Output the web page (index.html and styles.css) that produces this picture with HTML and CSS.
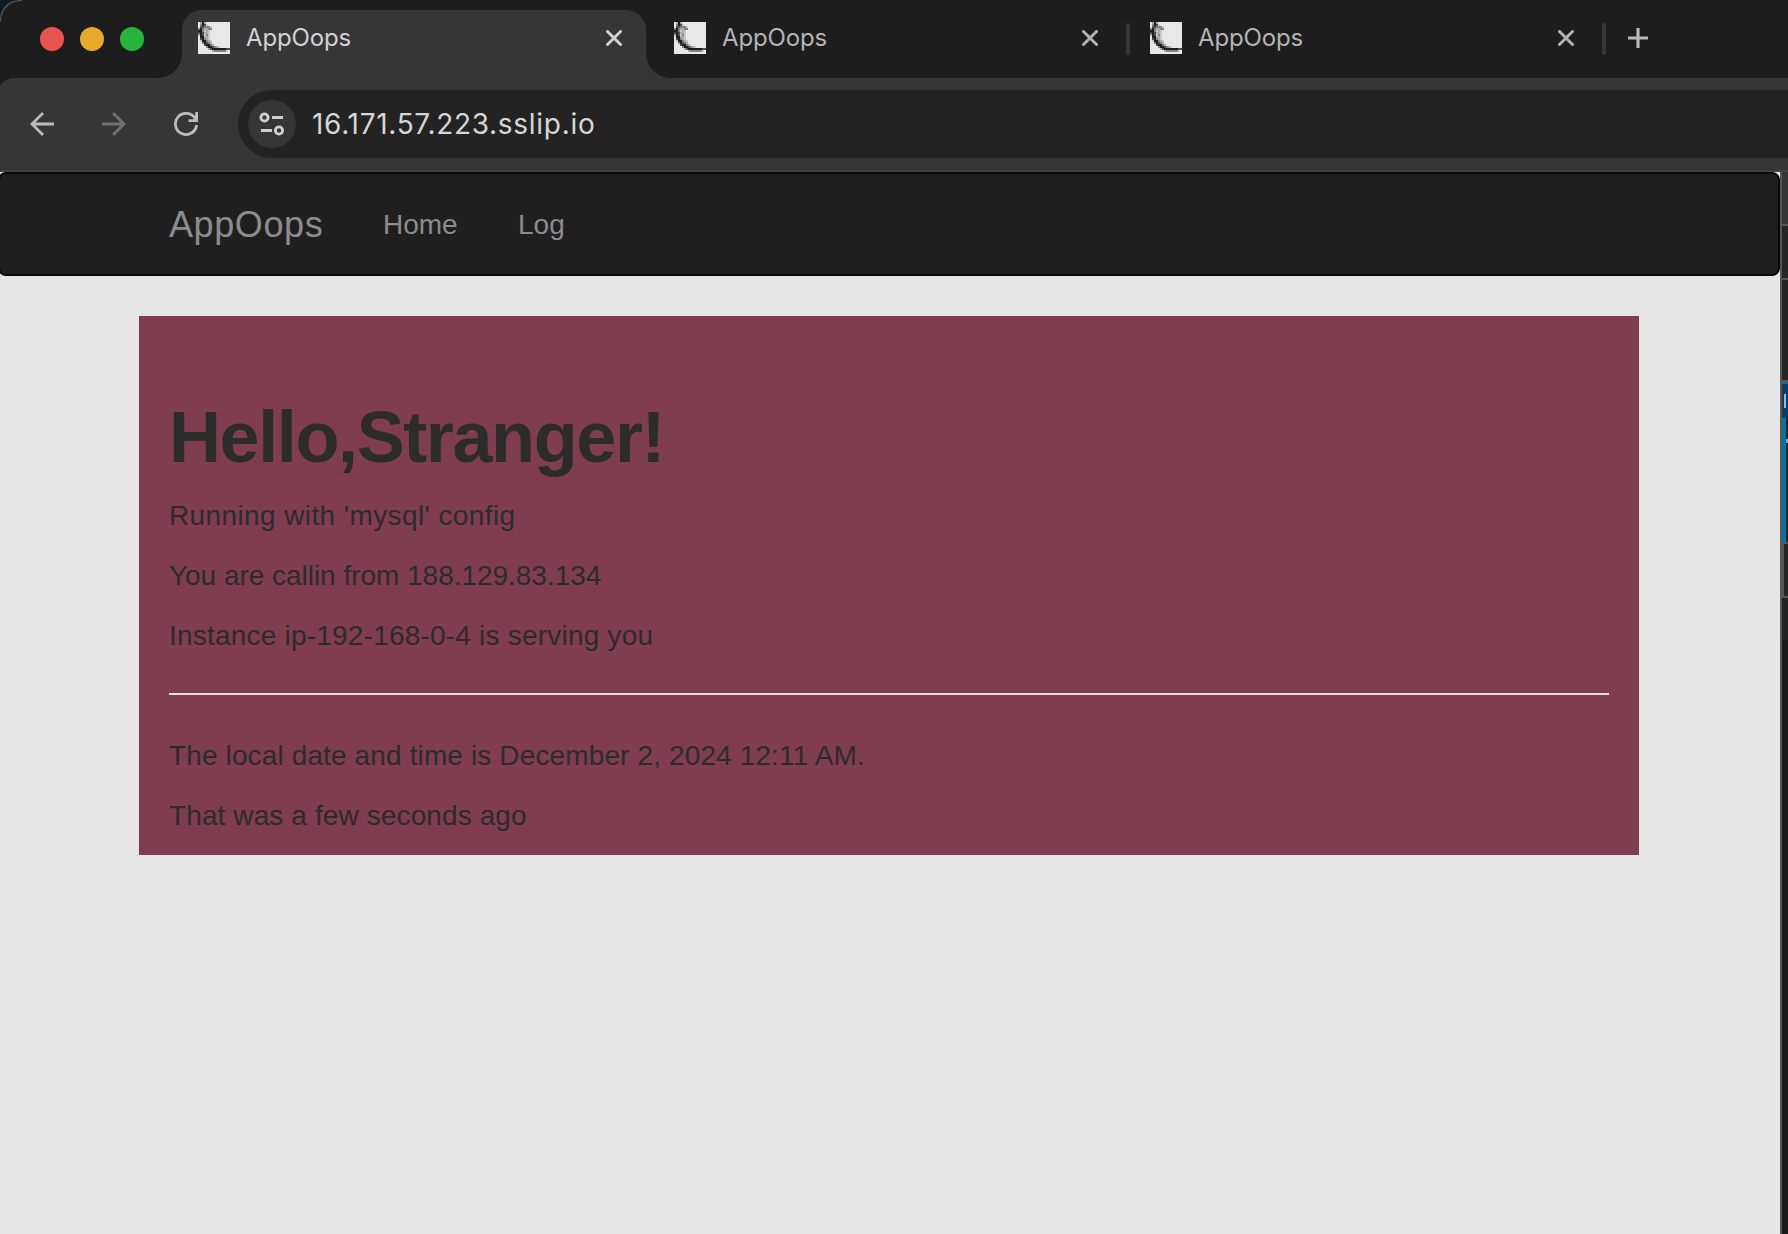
FILE: index.html
```html
<!DOCTYPE html>
<html lang="en">
<head>
<meta charset="utf-8">
<title>AppOops</title>
<link rel="stylesheet" href="styles.css">
</head>
<body>
<svg width="0" height="0" class="defs">
  <symbol id="flask" viewBox="0 0 16 16">
    <rect width="16" height="16" fill="#e8e8e8"/>
    <g shape-rendering="crispEdges" fill="none" stroke-width="1">
      <path stroke="#1e1e1e" d="M2 .5h1M2 1.500h1M1 3.500h1M0 4.500h2M1 5.500h1M1 6.500h1M1 7.500h2M2 8.500h1M2 9.500h2M3 10.500h1M4 11.500h2M5 12.500h2M7 13.500h7"/>
      <path stroke="#505050" d="M1 2.500h2M0 5.500h1M2 5.500h1M2 6.500h1M1 8.500h1M4 10.500h1M3 11.500h1M7 12.500h1M6 13.500h1M14 13.500h2M3 1.500h1"/>
      <path stroke="#828282" d="M1 1.500h1M3 2.500h3M0 3.500h1M2 3.500h1M5 3.500h2M2 4.500h1M4 6.500h1M3 8.500h1M4 9.500h1M2 10.500h1M5 10.500h1M6 11.500h1M4 12.500h1M8 12.500h1M8 14.500h6"/>
      <path stroke="#aaa" d="M1 .5h1M3 .5h1M3 3.500h2M4 4.500h1M3 5.500h2M0 6.500h1M3 7.500h2M4 8.500h1M5 9.500h1M6 10.500h1M7 11.500h1M9 12.500h1M5 13.500h1M7 14.500h1"/>
      <path stroke="#c8c8c8" d="M4 1.500h1M6 2.500h1M3 4.500h1M5 4.500h1M5 5.500h1M3 6.500h1M5 6.500h1M5 7.500h1M5 8.500h1M1 9.500h1M6 9.500h1M10 12.500h1M14 14.500h1"/>
    </g>
  </symbol>
  <symbol id="close" viewBox="0 0 16 16"><path d="M1.500 1.500L14.500 14.500M14.500 1.500L1.500 14.500" stroke="currentColor" stroke-width="2.900" stroke-linecap="round"/></symbol>
</svg>
<div class="screen">
  <div class="browser">
    <header class="tabs">
      <div class="lights"><i class="red"></i><i class="yellow"></i><i class="green"></i></div>
      <div class="tab active"><svg class="fav"><use href="#flask"/></svg><span>AppOops</span><svg class="x"><use href="#close"/></svg></div>
      <div class="tab"><svg class="fav"><use href="#flask"/></svg><span>AppOops</span><svg class="x"><use href="#close"/></svg></div>
      <i class="sep"></i>
      <div class="tab third"><svg class="fav"><use href="#flask"/></svg><span>AppOops</span><svg class="x"><use href="#close"/></svg></div>
      <i class="sep"></i>
      <svg class="plus" viewBox="0 0 20 20"><path d="M10 0V20M0 10H20" stroke="#b8b8b8" stroke-width="3.200"/></svg>
    </header>
    <div class="toolbar">
      <svg class="nav-icon" viewBox="0 0 24 24"><path d="M24 12H2M13 1L2 12L13 23" fill="none" stroke="#bcbcbc" stroke-width="2.800"/></svg>
      <svg class="nav-icon" viewBox="0 0 24 24"><path d="M0 12H22M11 1L22 12L11 23" fill="none" stroke="#717171" stroke-width="2.800"/></svg>
      <svg class="nav-icon reload" viewBox="0 0 24 24"><path d="M22.600 13A10.600 10.600 0 1 1 20.500 5.500L22.700 8M22.600 0V8.600H14.500" fill="none" stroke="#bcbcbc" stroke-width="2.800"/></svg>
      <div class="address">
        <span class="site"><svg viewBox="0 0 26 24"><g fill="none" stroke="#d0d0d0" stroke-width="2.800"><circle cx="5.500" cy="5.500" r="3.600"/><path d="M13 5.500H24M2 18.500H13"/><circle cx="20" cy="18.500" r="3.600"/></g></svg></span>
        <span class="url">16.171.57.223.sslip.io</span>
      </div>
    </div>
    <div class="edge"></div>
  </div>
  <div class="below">
    <main class="page">
      <nav class="navbar"><span class="brand">AppOops</span><span class="home">Home</span><span class="log">Log</span></nav>
      <section class="box">
        <h1>Hello,Stranger!</h1>
        <p class="t1">Running with 'mysql' config</p>
        <p class="t2">You are callin from 188.129.83.134</p>
        <p class="t3">Instance ip-192-168-0-4 is serving you</p>
        <hr>
        <p class="t4">The local date and time is December 2, 2024 12:11 AM.</p>
        <p class="t5">That was a few seconds ago</p>
      </section>
    </main>
    <aside class="strip">
      <i class="s1"></i><i class="s2"></i><i class="s3"></i>
      <i class="s4"><b></b></i><i class="s5"></i><i class="s6"></i><i class="s7"></i><i class="s8"></i>
    </aside>
  </div>
</div>
</body>
</html>
```
FILE: styles.css
```css
* { box-sizing: border-box; }
body { margin: 0; width: 1788px; height: 1234px; overflow: hidden; background: #101c24; font-family: "Liberation Sans", Arial, sans-serif; }
.defs { position: absolute; }
i { display: block; flex: none; }
svg { flex: none; display: block; }
.screen { height: 1234px; display: flex; flex-direction: column; }
.browser { position: relative; height: 172px; background: #1d1d1d; border-top-left-radius: 20px; flex: none; }
.browser::before { content: ""; position: absolute; left: 0; top: 0; width: 22px; height: 22px; border-radius: 20px 0 0 0; box-shadow: inset 1px 1px 0 #555; }
.tabs { height: 78px; display: flex; align-items: flex-start; font-family: Inter, sans-serif; }
.lights { display: flex; gap: 16px; padding: 27px 0 0 40px; width: 182px; flex: none; }
.lights i { width: 24px; height: 24px; border-radius: 50%; }
.red { background: #e9554e; }
.yellow { background: #e6a92a; }
.green { background: #25b53a; }
.tab { position: relative; width: 468px; height: 68px; margin-top: 10px; padding: 0 16px 12px; display: flex; align-items: center; color: #b4b4b4; font-size: 24px; flex: none; }
.tab.active { width: 464px; margin-right: 12px; background: #363636; border-radius: 20px 20px 0 0; color: #d2d2d2; }
.tab.active::before, .tab.active::after { content: ""; position: absolute; bottom: 0; width: 24px; height: 24px; }
.tab.active::before { left: -24px; background: radial-gradient(circle at 0 0, transparent 23.500px, #363636 24px); }
.tab.active::after { right: -24px; background: radial-gradient(circle at 100% 0, transparent 23.500px, #363636 24px); }
.tab.third { margin-left: 4px; }
.fav { width: 32px; height: 32px; }
.tab span { margin-left: 16px; padding-bottom: 2px; letter-spacing: -.15px; }
.x { width: 16px; height: 16px; margin-left: auto; margin-right: 12px; }
.active .x { margin-right: 8px; }
.sep { width: 4px; height: 32px; margin-top: 23px; border-radius: 2px; background: #373737; }
.plus { width: 20px; height: 20px; margin: 28px 0 0 22px; }
.toolbar { height: 92px; background: #363636; border-top-left-radius: 16px 10px; display: flex; align-items: center; padding: 0 0 0 30px; }
.nav-icon { width: 24px; height: 24px; margin-right: 48px; }
.reload { margin-right: 40px; }
.address { flex: 1; height: 68px; background: #232323; border-radius: 34px 0 0 34px; display: flex; align-items: center; padding-left: 10px; }
.site { width: 48px; height: 48px; border-radius: 50%; background: #363636; display: grid; place-items: center; }
.site svg { width: 26px; height: 24px; }
.url { margin-left: 16px; color: #d6d6d6; font: 28px Inter, sans-serif; letter-spacing: .7px; white-space: nowrap; }
.edge { height: 2px; background: #424242; }
.below { flex: 1; display: flex; }
.page { width: 1780px; background: #e6e6e6; overflow: hidden; }
.navbar { width: 1782px; margin-left: -2px; height: 104px; background: #1f1f1f; border: 2px solid #080808; border-radius: 8px; display: flex; align-items: center; padding: 2px 0 0 169px; color: #8c8c8c; font-size: 28px; white-space: nowrap; }
.brand { font-size: 36px; width: 214px; letter-spacing: .6px; }
.home { width: 135px; }
.box { width: 1500px; height: 539px; margin: 40px 0 0 139px; padding: 82px 30px 0; background: #803d51; color: #2c2c2c; font-size: 28px; line-height: 40px; }
h1 { margin: 0 0 19px; font-size: 72px; line-height: 79px; font-weight: 700; letter-spacing: -1.400px; }
p { margin: 0 0 20px; white-space: nowrap; }
.t1 { letter-spacing: .39px; }
.t2 { letter-spacing: -.03px; }
.t3 { letter-spacing: .21px; }
.t4 { letter-spacing: .13px; }
.t5 { letter-spacing: .11px; }
hr { border: 0; height: 2px; background: #e1e1e1; margin: 37px 0 41px; }
.strip { width: 8px; background: #555; padding-left: 2px; display: flex; flex-direction: column; }
.s1 { height: 52px; background: #363636; margin-bottom: 2px; }
.s2 { height: 52px; background: #252525; margin-bottom: 2px; }
.s3 { height: 100px; background: #252525; margin-bottom: 2px; }
.s4 { height: 36px; background: #083c61; border-top: 2px solid #0871a3; padding: 10px 0 0 2px; }
.s4 b { display: block; width: 2px; height: 14px; background: #9bb5e5; }
.s5 { height: 124px; border-left: 4px solid #0871a3; background: linear-gradient(#252525 21px, #4eb5ce 21px 25px, #252525 25px); margin-bottom: 2px; }
.s6 { height: 52px; margin: 0 0 2px 2px; background: #252525; }
.s7 { height: 42px; background: #232323; }
.s8 { flex: 1; background: #1b1b1b; }
```
